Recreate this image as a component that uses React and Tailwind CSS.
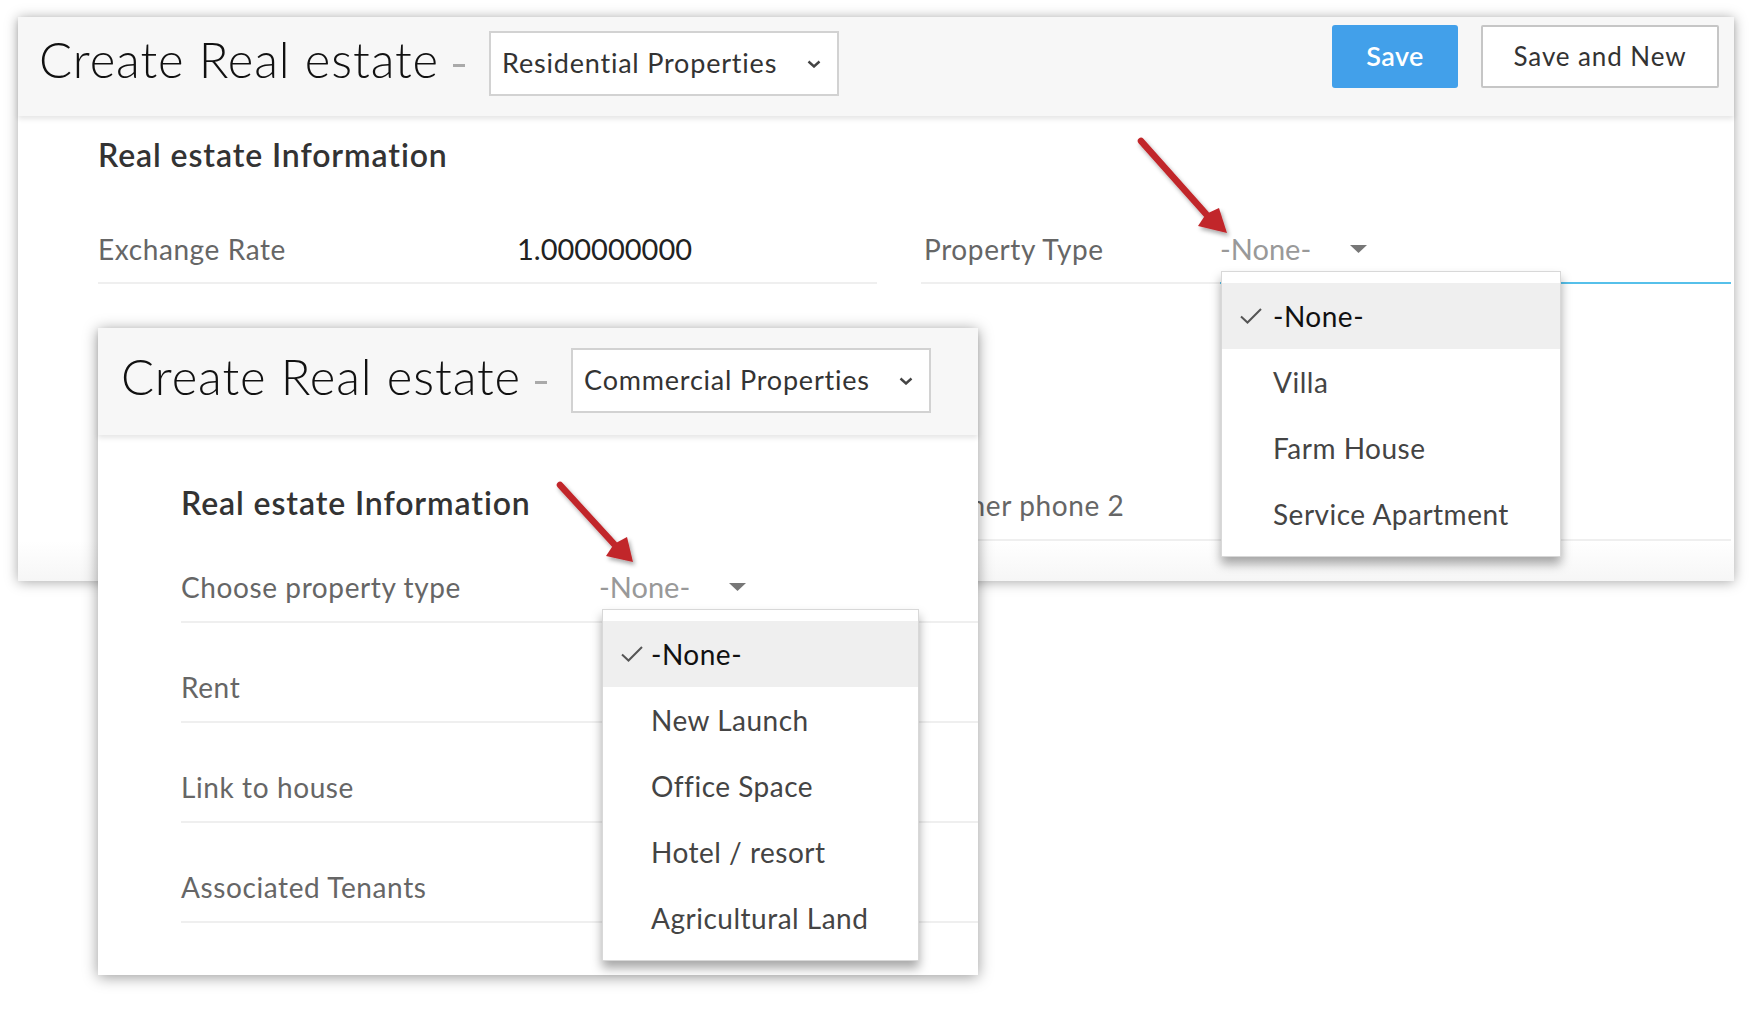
import React from 'react';

const FONT = "font-['Lato','Open_Sans',sans-serif]";

const Chevron = () => (
  <svg width="14" height="8" viewBox="0 0 14 8" className="shrink-0">
    <polyline points="1.5,1.5 7,6.5 12.5,1.5" fill="none" stroke="#444" strokeWidth="2.4" />
  </svg>
);

const Caret = () => (
  <svg width="17" height="8" viewBox="0 0 17 8" className="shrink-0 -mt-[3px]">
    <polygon points="0,0 17,0 8.5,8" fill="#777" />
  </svg>
);

const Check = () => (
  <svg width="22" height="16" viewBox="0 0 22 16" className="shrink-0">
    <polyline points="1,8.5 7.5,14.5 21,1" fill="none" stroke="#555" strokeWidth="2" />
  </svg>
);

const Header = ({ pick, boxWidth, topPad, children }) => (
  <div className={`relative z-10 flex items-start bg-[#f7f7f7] shadow-[0_3px_5px_rgba(0,0,0,0.10)] ${topPad}`}>
    <h1 className="text-[49px] leading-[56px] font-light text-[#111] tracking-[0.9px]">Create Real estate</h1>
    <span className="ml-[14px] mt-[33px] h-[3px] w-[12px] bg-[#aaa]" />
    <div className={`ml-[24px] flex h-[65px] items-center justify-between border-2 border-[#d2d2d2] bg-white pl-[11px] pr-[16px] ${boxWidth}`}>
      <span className="text-[27px] tracking-[0.8px] text-[#333]">{pick}</span>
      <Chevron />
    </div>
    {children}
  </div>
);

const Menu = ({ items, className, textPad }) => (
  <div className={`absolute z-20 border border-[#d8d8d8] bg-white pt-[11px] pb-[9px] shadow-[0_7px_10px_rgba(0,0,0,0.35)] ${className}`}>
    {items.map((item, i) => (
      <div
        key={item}
        className={`flex h-[66px] items-center text-[28px] tracking-[0.5px] ${i === 0 ? 'bg-[#efefef] text-[#111]' : 'text-[#444]'}`}
      >
        <span className={`flex justify-start pl-[18px] ${textPad}`}>{i === 0 && <Check />}</span>
        <span>{item}</span>
      </div>
    ))}
  </div>
);

const Arrow = ({ from, notch, w1, tip, w2 }) => (
  <g filter="url(#ds)">
    <line x1={from[0]} y1={from[1]} x2={notch[0]} y2={notch[1]} stroke="#c1262b" strokeWidth="6.5" strokeLinecap="round" />
    <polygon points={`${w1.join(',')} ${tip.join(',')} ${w2.join(',')} ${notch.join(',')}`} fill="#c1262b" />
  </g>
);

const heading = 'text-[32px] leading-[34px] font-semibold text-[#333] tracking-[0.9px]';
const label = 'text-[28px] leading-[34px] tracking-[0.6px] text-[#666]';

export default function App() {
  return (
    <div className={`relative h-[1028px] w-[1762px] overflow-hidden bg-white ${FONT}`}>
      {/* back form: residential */}
      <div className="pl-[18px] pt-[17px]">
        <div className="flex w-[1716px] flex-col bg-white shadow-[0_1px_12px_rgba(0,0,0,0.35)]">
          <Header pick="Residential Properties" boxWidth="w-[350px]" topPad="h-[99px] pl-[21px] pr-[15px] pt-[14px]">
            <div className="ml-auto -mt-[6px] flex gap-[23px]">
              <button className="h-[63px] w-[126px] rounded-[3px] bg-[#42a0ea] text-[27px] font-semibold tracking-[0.4px] text-white">Save</button>
              <button className="h-[63px] w-[238px] rounded-[2px] border-2 border-[#c6c6c6] bg-white text-[26px] tracking-[0.9px] text-[#333]">Save and New</button>
            </div>
          </Header>

          <div className="flex flex-col pl-[80px] pr-[3px]">
            <h2 className={`mt-[22px] ${heading}`}>Real estate Information</h2>
            <div className="flex items-start gap-[44px]">
              <div className="flex h-[112px] w-[779px] items-end border-b-2 border-[#efefef] pb-[16px]">
                <span className={`w-[419px] ${label}`}>Exchange Rate</span>
                <span className="text-[29px] leading-[34px] text-[#222]">1.000000000</span>
              </div>
              <div className="flex w-[810px] flex-col">
                <div className="flex h-[112px]">
                  <div className={`flex w-[299px] items-end border-b-2 border-[#efefef] pb-[16px] pl-[3px] ${label}`}>Property Type</div>
                  <div className="relative flex flex-1 items-end border-b-2 border-[#56c0ea] pb-[16px] leading-[34px]">
                    <span className="w-[130px] text-[29px] text-[#999]">-None-</span>
                    <span className="mb-[13px]"><Caret /></span>
                    <Menu
                      items={['-None-', 'Villa', 'Farm House', 'Service Apartment']}
                      className="left-[1px] top-[99px] w-[340px]"
                      textPad="w-[51px]"
                    />
                  </div>
                </div>
                <div className={`flex h-[257px] items-end border-b-2 border-[#efefef] pb-[17px] pl-[3px] ${label}`}>
                  Owner phone 2
                </div>
              </div>
            </div>
            <div className="-ml-[80px] -mr-[3px] h-[40px] bg-gradient-to-b from-white to-[#f6f6f6]" />
          </div>
        </div>
      </div>

      {/* front form: commercial */}
      <div className="absolute left-[98px] top-[328px] z-30 flex h-[647px] w-[880px] flex-col bg-white shadow-[0_2px_14px_rgba(0,0,0,0.4)]">
        <Header pick="Commercial Properties" boxWidth="w-[360px]" topPad="h-[107px] pl-[23px] pt-[20px]" />
        <div className="flex flex-col pl-[83px]">
          <h2 className={`mt-[51px] ${heading}`}>Real estate Information</h2>
          <div className="flex h-[103px] items-end border-b-2 border-[#efefef] pb-[17px]">
            <span className={`w-[418px] ${label}`}>Choose property type</span>
            <div className="relative flex items-end leading-[34px]">
              <span className="w-[130px] text-[29px] text-[#999]">-None-</span>
              <span className="mb-[13px]"><Caret /></span>
              <Menu
                items={['-None-', 'New Launch', 'Office Space', 'Hotel / resort', 'Agricultural Land']}
                className="left-[3px] top-[39px] w-[317px]"
                textPad="w-[48px]"
              />
            </div>
          </div>
          {['Rent', 'Link to house', 'Associated Tenants'].map((text) => (
            <div key={text} className={`flex h-[100px] items-end border-b-2 border-[#efefef] pb-[17px] ${label}`}>
              {text}
            </div>
          ))}
        </div>
      </div>

      {/* annotation arrows */}
      <svg className="pointer-events-none absolute left-0 top-0 z-40" width="1762" height="1028">
        <defs>
          <filter id="ds" x="-20%" y="-20%" width="140%" height="140%">
            <feDropShadow dx="2" dy="3" stdDeviation="2" floodColor="#000" floodOpacity="0.35" />
          </filter>
        </defs>
        <Arrow from={[1141, 141]} notch={[1206, 214]} w1={[1198, 226]} tip={[1227, 233]} w2={[1219, 208]} />
        <Arrow from={[560, 485]} notch={[614, 544]} w1={[606, 556]} tip={[633, 562]} w2={[627, 537]} />
      </svg>
    </div>
  );
}
